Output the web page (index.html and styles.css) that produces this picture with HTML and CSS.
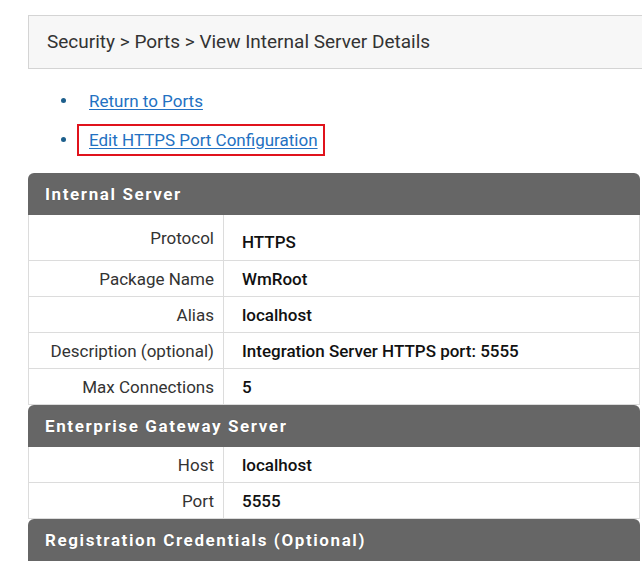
FILE: index.html
```html
<!DOCTYPE html>
<html>
<head>
<meta charset="utf-8">
<link rel="stylesheet" href="styles.css">
</head>
<body>
<div class="page">
  <div class="breadcrumb">Security &gt; Ports &gt; View Internal Server Details</div>
  <ul class="links">
    <li><a href="#">Return to Ports</a></li>
    <li><span class="highlight"><a href="#">Edit HTTPS Port Configuration</a></span></li>
  </ul>
  <table class="details">
    <tr class="head"><th colspan="2">Internal Server</th></tr>
    <tr class="first"><td class="label">Protocol</td><td class="value">HTTPS</td></tr>
    <tr><td class="label">Package Name</td><td class="value">WmRoot</td></tr>
    <tr><td class="label">Alias</td><td class="value">localhost</td></tr>
    <tr><td class="label">Description (optional)</td><td class="value">Integration Server HTTPS port: 5555</td></tr>
    <tr><td class="label">Max Connections</td><td class="value">5</td></tr>
    <tr class="head"><th colspan="2">Enterprise Gateway Server</th></tr>
    <tr><td class="label">Host</td><td class="value">localhost</td></tr>
    <tr><td class="label">Port</td><td class="value">5555</td></tr>
    <tr class="head"><th colspan="2">Registration Credentials (Optional)</th></tr>
  </table>
</div>
</body>
</html>
```

FILE: styles.css
```css
html, body {
  margin: 0;
  padding: 0;
  background: #ffffff;
  overflow: hidden;
}
body {
  font-family: Roboto, "Liberation Sans", sans-serif;
  font-size: 17px;
  color: #222;
}
.page {
  padding: 15px 0 0 28px;
}
.breadcrumb {
  box-sizing: border-box;
  width: 640px;
  height: 54px;
  background: #f7f7f7;
  border: 1px solid #d4d4d4;
  padding-left: 18px;
  line-height: 52px;
  color: #333;
  font-size: 19px;
}
.links {
  margin: 0;
  padding: 12px 0 0 33px;
  list-style: none;
}
.links li {
  display: flex;
  align-items: center;
  height: 39px;
  font-size: 17px;
}
.links li::before {
  content: "";
  width: 5px;
  height: 5px;
  border-radius: 50%;
  background: #1d5f8c;
  margin-right: 11px;
}
.links li > a {
  margin-left: 12px;
}
.links a {
  color: #2371c2;
  text-decoration: underline;
  text-underline-offset: 2px;
}
.highlight {
  display: inline-block;
  line-height: 28px;
  border: 2px solid #e0131c;
  padding: 0 5px 0 10px;
}
.details {
  margin-top: 14px;
  width: 612px;
  border-collapse: separate;
  border-spacing: 0;
}
.head th {
  background: #666666;
  color: #ffffff;
  text-align: left;
  font-weight: 700;
  font-size: 17px;
  letter-spacing: 1.6px;
  padding: 0 0 0 17px;
  height: 42px;
  border-radius: 6px 6px 0 0;
  text-shadow: 0 0 1px rgba(0,0,0,0.3);
}
td {
  border-bottom: 1px solid #dcdcdc;
  line-height: 20px;
  padding: 8px 0 7px;
  font-size: 17px;
}
td.label {
  width: 185px;
  text-align: right;
  padding-right: 9px;
  color: #333;
  border-left: 1px solid #dcdcdc;
  border-right: 1px solid #dcdcdc;
}
td.value {
  padding-left: 18px;
  font-weight: 500;
  color: #111;
  border-right: 1px solid #dcdcdc;
}
tr.first td {
  vertical-align: top;
}
tr.first td.label {
  padding-top: 13px;
  padding-bottom: 0;
}
tr.first td.value {
  padding-top: 17px;
  padding-bottom: 8px;
}
```
